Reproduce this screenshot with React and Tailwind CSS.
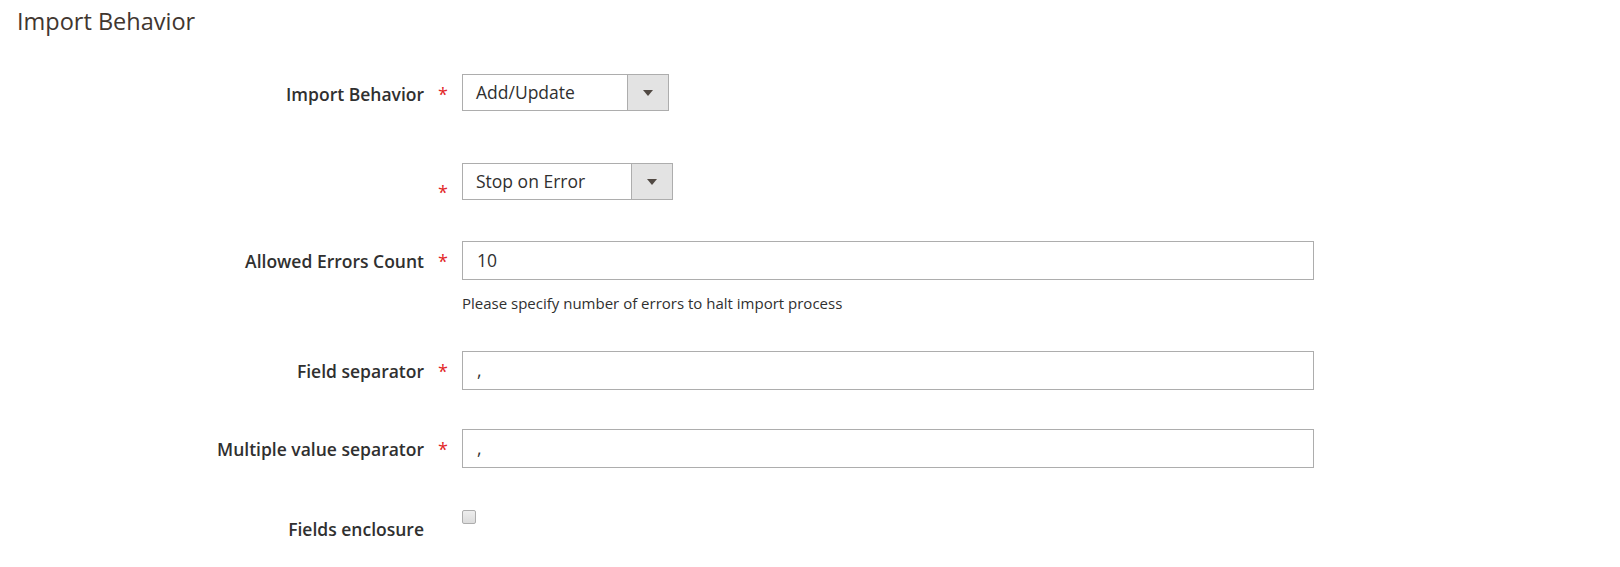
import React from 'react';

const Req = ({ className = 'pt-[9px]' }) => (
  <span className={`w-[38px] shrink-0 text-center text-[18px] leading-[22px] text-[#e22626] ${className}`}>*</span>
);

const Label = ({ children, className = 'pt-[10px]' }) => (
  <div className={`w-[424px] shrink-0 text-right text-[17.5px] font-semibold leading-[21px] text-[#303030] ${className}`}>
    {children}
  </div>
);

const Select = ({ value, width }) => (
  <div className={`flex h-[37px] ${width} border border-[#adadad] bg-white`}>
    <div className="flex flex-1 items-center pl-[13px] text-[17.5px] text-[#303030]">{value}</div>
    <div className="flex w-[41px] items-center justify-center border-l border-[#adadad] bg-[#e3e3e3]">
      <svg width="10" height="6" viewBox="0 0 10 6">
        <path d="M0 0h10L5 6z" fill="#514943" />
      </svg>
    </div>
  </div>
);

const Input = ({ value }) => (
  <div className="flex h-[39px] w-[852px] items-center border border-[#adadad] bg-white pl-[14px] text-[17.5px] text-[#303030]">
    {value}
  </div>
);

export default function App() {
  return (
    <div className="min-h-[567px] bg-white font-['Open_Sans',sans-serif]">
      <h2 className="pl-[17px] pt-[7px] text-[23.5px] font-normal leading-[28px] text-[#41362f]">Import Behavior</h2>

      <div className="flex flex-col">
        <div className="mt-[39px] flex h-[37px] items-start">
          <Label>Import Behavior</Label>
          <Req />
          <Select value="Add/Update" width="w-[207px]" />
        </div>

        <div className="mt-[52px] flex h-[37px] items-start">
          <Label> </Label>
          <Req className="pt-[18px]" />
          <Select value="Stop on Error" width="w-[211px]" />
        </div>

        <div className="mt-[41px] flex items-start">
          <Label>Allowed Errors Count</Label>
          <Req />
          <div className="flex flex-col">
            <Input value="10" />
            <p className="mt-[13px] text-[15px] leading-[20px] text-[#303030]">
              Please specify number of errors to halt import process
            </p>
          </div>
        </div>

        <div className="mt-[38px] flex h-[39px] items-start">
          <Label>Field separator</Label>
          <Req />
          <Input value="," />
        </div>

        <div className="mt-[39px] flex h-[39px] items-start">
          <Label>Multiple value separator</Label>
          <Req />
          <Input value="," />
        </div>

        <div className="mt-[42px] flex items-start">
          <Label className="pt-[9px]">Fields enclosure</Label>
          <span className="w-[38px] shrink-0" />
          <div className="h-[14px] w-[14px] rounded-[2px] border border-[#adadad] bg-gradient-to-b from-[#eeeeee] to-[#dcdcdc]" />
        </div>
      </div>
    </div>
  );
}
